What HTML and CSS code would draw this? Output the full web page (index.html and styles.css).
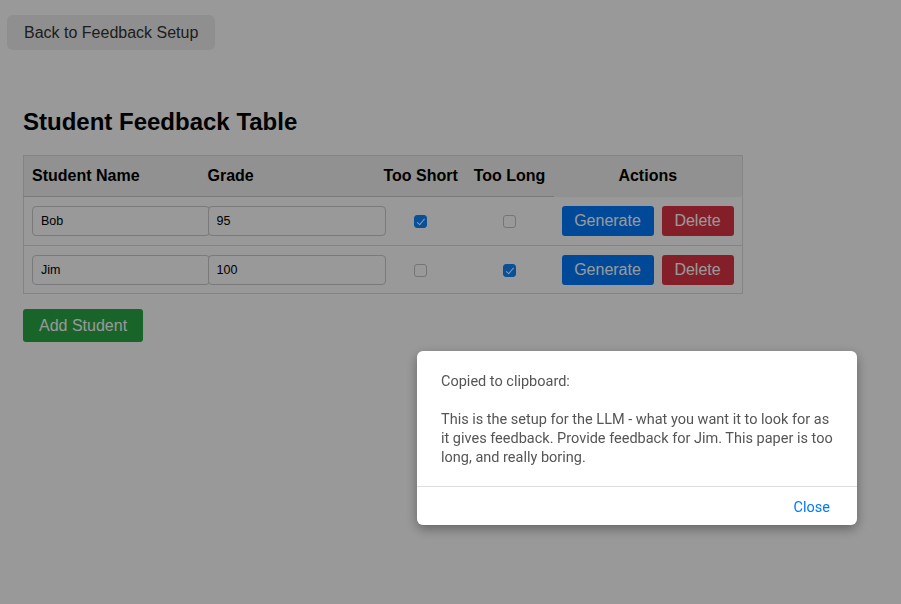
FILE: index.html
```html
<!DOCTYPE html>
<html>
<head>
<meta charset="utf-8">
<link rel="stylesheet" href="styles.css">
</head>
<body>
<div class="topbar">
  <button class="back-btn">Back to Feedback Setup</button>
</div>
<main class="content">
  <h2 class="title">Student Feedback Table</h2>
  <table class="table">
    <colgroup>
      <col class="c-name"><col class="c-grade"><col class="c-short"><col class="c-long"><col class="c-actions">
    </colgroup>
    <thead>
      <tr>
        <th class="left">Student Name</th>
        <th class="left">Grade</th>
        <th>Too Short</th>
        <th>Too Long</th>
        <th class="actions-h">Actions</th>
      </tr>
    </thead>
    <tbody>
      <tr>
        <td><input class="field" type="text" value="Bob"></td>
        <td><input class="field" type="text" value="95"></td>
        <td class="center"><input class="check" type="checkbox" checked></td>
        <td class="center"><input class="check" type="checkbox"></td>
        <td><div class="actions"><button class="btn btn-blue">Generate</button><button class="btn btn-red">Delete</button></div></td>
      </tr>
      <tr>
        <td><input class="field" type="text" value="Jim"></td>
        <td><input class="field" type="text" value="100"></td>
        <td class="center"><input class="check" type="checkbox"></td>
        <td class="center"><input class="check" type="checkbox" checked></td>
        <td><div class="actions"><button class="btn btn-blue">Generate</button><button class="btn btn-red">Delete</button></div></td>
      </tr>
    </tbody>
  </table>
  <button class="add-btn">Add Student</button>
</main>
<div class="overlay"></div>
<div class="modal">
  <div class="modal-body">Copied to clipboard:

This is the setup for the LLM - what you want it to look for as it gives feedback. Provide feedback for Jim. This paper is too long, and really boring.</div>
  <div class="modal-footer"><button class="close-btn">Close</button></div>
</div>
</body>
</html>
```

FILE: styles.css
```css
html, body {
  margin: 0;
  padding: 0;
  background: #ffffff;
  font-family: "Liberation Sans", Arial, sans-serif;
  color: #000;
}

.topbar {
  padding: 15px 7px 0;
}

.back-btn {
  font-family: "Liberation Sans", Arial, sans-serif;
  font-size: 16px;
  line-height: 19px;
  padding: 8px 17px;
  border: none;
  border-radius: 6px;
  background: #eeeeee;
  color: #333;
}

.content {
  padding: 0 23px;
}

.title {
  margin: 58px 0 19px;
  font-size: 24px;
  line-height: 28px;
  font-weight: bold;
}

.table {
  border-collapse: collapse;
  table-layout: fixed;
  width: 720px;
  border: 1px solid #dddddd;
}

.c-name { width: 176px; }
.c-grade { width: 176px; }
.c-short { width: 90px; }
.c-long { width: 88px; }
.c-actions { width: 189px; }

.table th {
  background: #f2f2f2;
  font-size: 16px;
  line-height: 18px;
  padding: 11px 8px;
  border-bottom: 1px solid #cccccc;
  text-align: center;
  white-space: nowrap;
}

.table th.left { text-align: left; }
.table th.actions-h { border-bottom-color: #f2f2f2; }

.table td {
  padding: 9px 8px 9px;
  border-bottom: 1px solid #dddddd;
  vertical-align: middle;
}

.table tbody tr:last-child td { padding-bottom: 8px; }

.table td.center { text-align: center; }

.check {
  appearance: none;
  -webkit-appearance: none;
  display: inline-block;
  margin: 0;
  width: 13px;
  height: 13px;
  vertical-align: middle;
  border: 1px solid #c4c4c4;
  border-radius: 3px;
  background: #fff;
  position: relative;
}

.check:checked {
  background: #0f86ff;
  border-color: #0f86ff;
}

.check:checked::after {
  content: "";
  position: absolute;
  left: 3.5px;
  top: 1px;
  width: 3px;
  height: 6.5px;
  border: solid #fff;
  border-width: 0 1.8px 1.8px 0;
  transform: rotate(40deg);
}

.field {
  display: block;
  width: 100%;
  height: 28px;
  padding: 0 8px;
  border: 1px solid #cccccc;
  border-radius: 4px;
  font-family: "Liberation Sans", Arial, sans-serif;
  font-size: 12.5px;
  color: #000;
  background: #fff;
}

.actions {
  display: flex;
  gap: 8px;
}

.btn {
  font-family: "Liberation Sans", Arial, sans-serif;
  font-size: 16px;
  line-height: 18px;
  padding: 6px 12px;
  border: none;
  border-radius: 3px;
  color: #fff;
}

.btn-blue { background: #007bff; width: 92px; }
.btn-red { background: #dc3545; width: 72px; }

.add-btn {
  margin-top: 15px;
  font-family: "Liberation Sans", Arial, sans-serif;
  font-size: 16px;
  line-height: 19px;
  padding: 7px 16px;
  border: none;
  border-radius: 3px;
  background: #28a745;
  color: #fff;
}

.overlay {
  position: fixed;
  inset: 0;
  background: rgba(0, 0, 0, 0.4);
}

.modal {
  position: fixed;
  left: 417px;
  top: 351px;
  width: 440px;
  background: #fff;
  border-radius: 6px;
  box-shadow: 0 4px 12px rgba(0, 0, 0, 0.35);
  font-family: Roboto, "Noto Sans", sans-serif;
}

.modal-body {
  padding: 21px 24px 19px;
  font-size: 14.5px;
  line-height: 19px;
  color: #555;
  white-space: pre-wrap;
}

.modal-footer {
  border-top: 1px solid #dddddd;
  display: flex;
  justify-content: flex-end;
  padding: 0 15px;
}

.close-btn {
  font-family: Roboto, "Noto Sans", sans-serif;
  font-size: 14.5px;
  line-height: 19px;
  padding: 11px 12px 8px;
  border: none;
  background: transparent;
  color: #007aff;
}
```
